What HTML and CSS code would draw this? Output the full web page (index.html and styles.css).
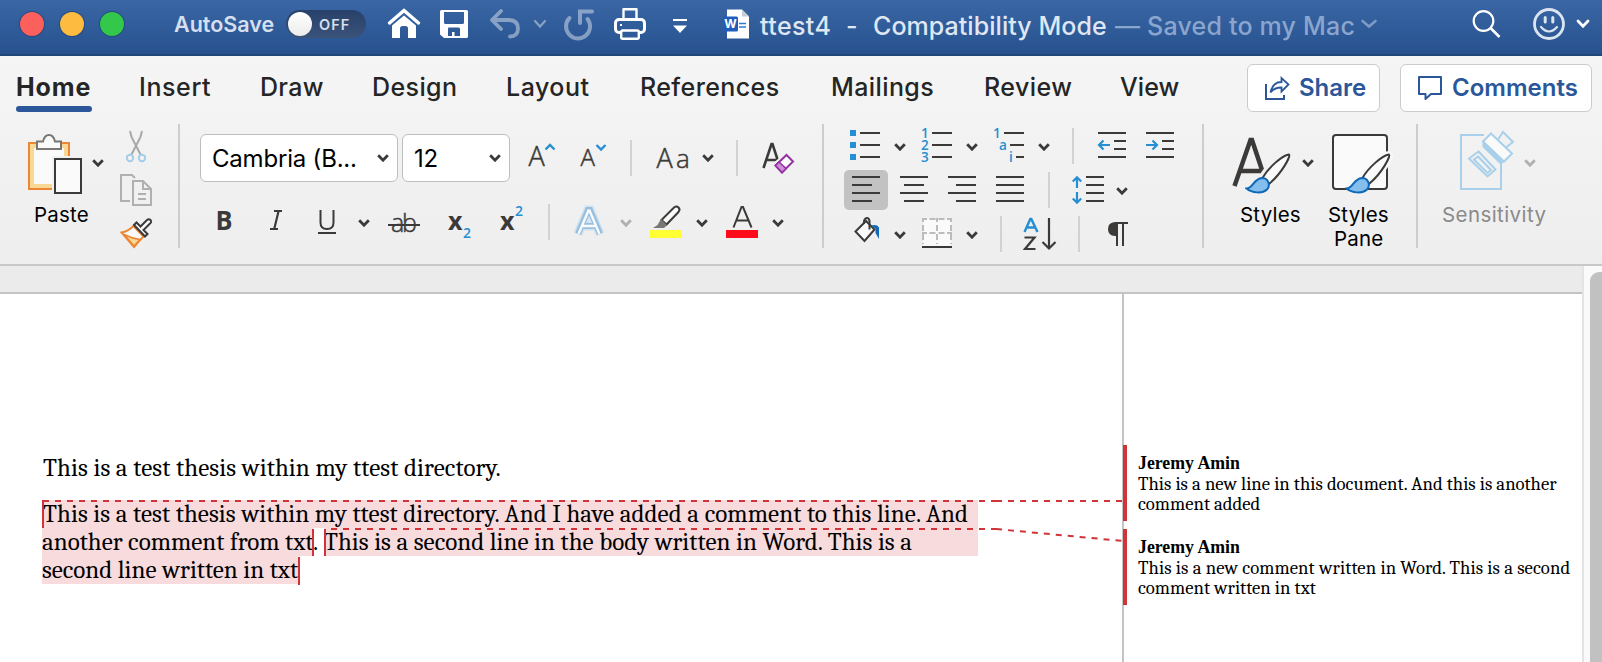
FILE: index.html
```html
<!DOCTYPE html>
<html lang="en">
<head>
<meta charset="utf-8">
<title>ttest4</title>
<link rel="stylesheet" href="styles.css">
</head>
<body>
<svg class="defs" width="0" height="0">
  <symbol id="chev" viewBox="0 0 12 8"><path d="M1.2 1.3 6 6.2 10.8 1.3" fill="none" stroke="currentColor" stroke-width="2.8"/></symbol>
  <symbol id="brush" viewBox="0 0 48 42">
    <path d="M17.500 25C23 15 37 2.500 44 1.500C46 3 37 20 24.500 30.500Z" fill="#fafafa" stroke="#3b3a39" stroke-width="2"/>
    <path d="M1.500 35.500C8 35.500 8 26 17 25C23 25 26 32 22 36.500C17 41 7 40 1.500 35.500Z" fill="#83beec" stroke="#1068b8" stroke-width="2"/>
  </symbol>
</svg>

<header class="titlebar">
  <i class="light red"></i><i class="light amber"></i><i class="light green"></i>
  <span class="autosave t">AutoSave</span>
  <span class="toggle"><i class="knob"></i><span class="off t">OFF</span></span>
  <svg class="ml-22" width="32" height="32" viewBox="0 0 32 32"><path d="M1.500 15 16 2.500 30.500 15" fill="none" stroke="#fff" stroke-width="3.400" stroke-linecap="round"/><path d="M4 17.500 16 7.500 28 17.500V30H20V20.500Q20 18 17.500 18H14.500Q12 18 12 20.500V30H4Z" fill="#fff"/></svg>
  <svg class="ml-20" width="28" height="32" viewBox="0 0 28 32"><path fill="#fff" fill-rule="evenodd" d="M1.500 2H26.500Q28 2 28 3.500V28.500Q28 30 26.500 30H4L0 26.500V3.500Q0 2 1.500 2ZM4 4V14.500Q4 16 5.500 16H22.500Q24 16 24 14.500V4ZM8.500 19.500Q8 20 8 21V28H12V24H14.500V28H20V21Q20 19.500 18.500 19.500Z"/></svg>
  <svg class="ml-22 dim" width="30" height="32" viewBox="0 0 30 32"><path d="M11 3 2 12 11 21M2.500 12H19Q28 12.500 28 20.500 28 28.500 20 28.500" fill="none" stroke="#fff" stroke-width="3.800" stroke-linecap="round" stroke-linejoin="round"/></svg>
  <svg class="ml-14 dim" width="12" height="8" viewBox="0 0 12 8"><path d="M1 1 6 6.500 11 1" fill="none" stroke="#fff" stroke-width="2.200" stroke-linecap="round"/></svg>
  <svg class="ml-18 dim" width="30" height="34" viewBox="0 0 30 34"><path d="M5.500 11A12 12 0 1 0 23.500 12M16 16V4.500H28" fill="none" stroke="#fff" stroke-width="4" stroke-linecap="round" stroke-linejoin="miter"/></svg>
  <svg class="ml-20" width="32" height="32" viewBox="0 0 32 32"><path d="M9.500 10V1.200H22.500V10" fill="none" stroke="#fff" stroke-width="2.400" stroke-linejoin="round"/><rect x="1.500" y="11.500" width="29" height="13" rx="3.500" fill="none" stroke="#fff" stroke-width="3"/><rect x="7.200" y="22.500" width="17.600" height="8.300" rx="1.500" fill="#2e5a9a" stroke="#fff" stroke-width="2.400"/><rect x="6" y="16" width="2" height="2" fill="#fff"/></svg>
  <svg class="ml-27 drop" width="14" height="16" viewBox="0 0 14 16"><path d="M0 1H14V3H0ZM0 7.500H14L7 15Z" fill="#fff"/></svg>
  <svg class="ml-36" width="27" height="32" viewBox="0 0 27 32"><path d="M4 1.500H19L26 8.500V30.500H4Z" fill="#fff"/><path d="M19 1.500V8.500H26Z" fill="#c6ccd4"/><path d="M16 15.500H23M16 19H23" stroke="#2b7cd3" stroke-width="1.400"/><rect x="0" y="8.500" width="15" height="15" rx="1.500" fill="#1f5cbd"/><text x="7.500" y="20" text-anchor="middle" class="wmark">W</text></svg>
  <span class="title t t1">ttest4</span><span class="title t t2">-</span><span class="title t t3">Compatibility Mode</span><span class="title faint t t4">— Saved to my Mac</span>
  <svg width="16" height="8" viewBox="0 0 16 8"><path d="M1.500 1 8 6.500 14.500 1" fill="none" stroke="#7d9bc6" stroke-width="2.600" stroke-linecap="round"/></svg>
  <svg class="search" width="30" height="32" viewBox="0 0 30 32"><circle cx="12.500" cy="13" r="9.800" fill="none" stroke="#fff" stroke-width="2.200"/><path d="M19.500 20 28.500 29" stroke="#fff" stroke-width="2.600"/></svg>
  <svg class="ml-32" width="32" height="32" viewBox="0 0 32 32"><circle cx="16" cy="16" r="14.500" fill="none" stroke="#dbe4f1" stroke-width="2.800"/><path d="M12.200 9.500V14M19.800 9.500V14" stroke="#dbe4f1" stroke-width="3" stroke-linecap="round"/><path d="M8 19Q16 28 24 19" fill="none" stroke="#dbe4f1" stroke-width="2.200" stroke-linecap="round"/></svg>
  <svg class="ml-12" width="12" height="8" viewBox="0 0 12 8"><path d="M1 1 6 6.200 11 1" fill="none" stroke="#fff" stroke-width="2.800" stroke-linecap="round"/></svg>
</header>

<section class="ribbon">
  <nav class="tabs">
    <span class="tab w-home active"><b class="t">Home</b></span>
    <span class="tab w-insert t">Insert</span>
    <span class="tab w-draw t">Draw</span>
    <span class="tab w-design t">Design</span>
    <span class="tab w-layout t">Layout</span>
    <span class="tab w-refs t">References</span>
    <span class="tab w-mail t">Mailings</span>
    <span class="tab w-review t">Review</span>
    <span class="tab w-view t">View</span>
    <button class="pill share"><svg width="26" height="26" viewBox="0 0 26 26"><path d="M2 9V24H20V20" fill="none" stroke="#2b579a" stroke-width="2"/><path d="M6.500 17.500C8 10 12 7 17.500 7V3L24.500 9.500 17.500 16.500V12.500C13 12.500 9 14 6.500 17.500Z" fill="none" stroke="#2b579a" stroke-width="1.800"/></svg><span class="t">Share</span></button>
    <button class="pill comments"><svg width="26" height="26" viewBox="0 0 26 26"><path d="M2 2H24V19H14L8.500 24V19H2Z" fill="none" stroke="#2b579a" stroke-width="2" stroke-linejoin="round"/></svg><span class="t">Comments</span></button>
  </nav>

  <div class="tools">
    <div class="group clip">
      <div class="big paste">
        <div class="bigrow">
          <svg width="54" height="60" viewBox="0 0 54 60"><path d="M1 9H41V55H1Z" fill="#f8d894" stroke="#ed8733" stroke-width="2"/><path d="M6 14H36V50H6Z" fill="#fafafa"/><path d="M24 22H43V57H24Z" fill="#f1f1f1"/><path d="M9 15V7.500H15C16 3 18 1 21 1S26 3 27 7.500H33V15Z" fill="#fafafa" stroke="#797774" stroke-width="2"/><path d="M27 25H53V59H27Z" fill="#fafafa" stroke="#3b3a39" stroke-width="2"/></svg>
          <svg class="chev up ml-10"><use href="#chev"/></svg>
        </div>
        <span class="label l-paste t">Paste</span>
      </div>
      <div class="clipcol">
        <svg width="32" height="32" viewBox="0 0 32 32"><path d="M10 1 11.500 7 20.500 24.500M22 1 20.500 7 11.500 24.500" fill="none" stroke="#a9a8a7" stroke-width="2"/><circle cx="10" cy="28" r="3.200" fill="none" stroke="#a5cde8" stroke-width="2"/><circle cx="22" cy="28" r="3.200" fill="none" stroke="#a5cde8" stroke-width="2"/></svg>
        <svg width="32" height="32" viewBox="0 0 32 32"><path d="M10 27H1V1H12L15 4" fill="none" stroke="#b1b0af" stroke-width="2"/><path d="M13 7H23L31 15V31H13ZM23 7V15H31M18 20H26M18 25H26" fill="none" stroke="#b1b0af" stroke-width="2"/></svg>
        <svg width="32" height="32" viewBox="0 0 32 32"><path d="M1.500 14.500Q8 13.500 13.500 8L23.500 18.500Q20 22 14 29Z" fill="#fafafa" stroke="#ed8733" stroke-width="2"/><path d="M4 16.500Q12 20.500 20 21.500L14 28Z" fill="#f8d894" stroke="#ed8733" stroke-width="1.600"/><path d="M14 7 16.500 4.500 20.500 8.500 27 2Q29 .5 30.500 2 32 4 30 5.500L23.500 12 27.500 16 25 18.500Z" fill="#fafafa" stroke="#3b3a39" stroke-width="2"/></svg>
      </div>
    </div>
    <i class="divider"></i>

    <div class="group font">
      <div class="row r48">
        <span class="select s-font"><span class="t">Cambria (B...</span><svg class="chev"><use href="#chev"/></svg></span>
        <span class="select s-size"><span class="t">12</span><svg class="chev"><use href="#chev"/></svg></span>
        <svg class="ml-18" width="28" height="48"><text class="g" x=".5" y="32" font-size="27">A</text><path d="M17.500 15.500 22 11 26.500 15.500" fill="none" stroke="#268ed2" stroke-width="2.400"/></svg>
        <svg class="ml-24" width="28" height="48"><text class="g" x=".5" y="32" font-size="24">A</text><path d="M16.500 11 21 15.500 25.500 11" fill="none" stroke="#268ed2" stroke-width="2.400"/></svg>
        <i class="sep ml-22"></i>
        <svg class="ml-24" width="34" height="48"><text class="g" x=".5" y="34" font-size="27">A</text><text class="g" x="20" y="34" font-size="26">a</text></svg>
        <svg class="chev ml-12"><use href="#chev"/></svg>
        <i class="sep ml-22"></i>
        <svg class="ml-22" width="36" height="48"><path d="M3.500 34 11.500 10H12.500L19 30M6 26H18" fill="none" stroke="#3b3a39" stroke-width="2.600"/><path d="M15 31 27 20.500 33.500 27.500 21.500 38Z" fill="#fafafa" stroke="#f1f1f1" stroke-width="5"/><path d="M15.500 31.500 26.500 21 33 27.500 22 38.500Z" fill="#fff" stroke="#9332a0" stroke-width="2"/><path d="M15.500 31.500 19 28 26 34.500 22 38.500Z" fill="#cf8fd6" stroke="#9332a0" stroke-width="1.600"/></svg>
      </div>
      <div class="row r36 mt-22">
        <svg class="ml-14" width="22" height="36"><text class="g bd" x="1.500" y="26" font-size="26" textLength="17" lengthAdjust="spacingAndGlyphs">B</text></svg>
        <svg class="ml-32" width="18" height="36"><path d="M6 7H14M2 25H10M10.600 7 6.200 25" fill="none" stroke="#3b3a39" stroke-width="2.200"/></svg>
        <svg class="ml-32" width="18" height="36"><path d="M2.500 6V18.500Q2.500 25 9 25T15.500 18.500V6" fill="none" stroke="#3b3a39" stroke-width="2"/><path d="M0 29H18" stroke="#3b3a39" stroke-width="2"/></svg>
        <svg class="chev low ml-22"><use href="#chev"/></svg>
        <svg class="ml-18" width="32" height="36"><text class="g" x="3" y="27.500" font-size="25" textLength="26">ab</text><path d="M0 21H32" stroke="#3b3a39" stroke-width="2"/></svg>
        <svg class="ml-28" width="26" height="36"><text class="g bd" x="0" y="26" font-size="25">x</text><text class="g blue" x="15" y="34" font-size="14">2</text></svg>
        <svg class="ml-26" width="24" height="36"><text class="g bd" x="0" y="26" font-size="25">x</text><text class="g blue" x="15" y="12" font-size="14">2</text></svg>
        <i class="sep ml-24"></i>
        <svg class="ml-24" width="30" height="36" viewBox="0 0 30 36"><path d="M4 30 14 6H16L26 30M8 22H22" fill="none" stroke="#cfe2f1" stroke-width="9"/><path d="M4 30 14 6H16L26 30M8 22H22" fill="none" stroke="#97bfdf" stroke-width="6"/><path d="M4.500 30 14.500 6.500H15.500L25.500 30M9 22H21" fill="none" stroke="#fafafa" stroke-width="2.400"/></svg>
        <svg class="chev low pale ml-16"><use href="#chev"/></svg>
        <svg class="ml-18" width="32" height="36"><path d="M11.500 16 24 3.500Q26.500 1.500 28.500 3.500T28.500 8L16.500 20.500Z" fill="#fafafa" stroke="#3b3a39" stroke-width="2"/><path d="M11 15 17 21 14 24H3L7.500 21Z" fill="#797774"/><path d="M0 26H32V34H0Z" fill="#ffff33"/></svg>
        <svg class="chev low ml-14"><use href="#chev"/></svg>
        <svg class="ml-18" width="32" height="36"><path d="M7.500 23.500 15.500 3H17L25.500 23.500M10.500 16.500H22.500" fill="none" stroke="#3b3a39" stroke-width="2"/><path d="M0 26H32V34H0Z" fill="#fd0b1b"/></svg>
        <svg class="chev low ml-14"><use href="#chev"/></svg>
      </div>
    </div>
    <i class="divider"></i>

    <div class="group para">
      <div class="row r36 mt-4">
        <svg class="ml-6" width="30" height="36"><path d="M0 2H6V8H0ZM0 14H6V20H0ZM0 26H6V32H0Z" fill="#268ed2"/><path d="M10 5H30M10 17H30M10 29H30" stroke="#3b3a39" stroke-width="2"/></svg>
        <svg class="chev low ml-14"><use href="#chev"/></svg>
        <svg class="ml-16" width="30" height="36"><text class="n" x="-1" y="10">1</text><text class="n" x="-1" y="22">2</text><text class="n" x="-1" y="34">3</text><path d="M10 5H30M10 17H30M10 29H30" stroke="#3b3a39" stroke-width="2"/></svg>
        <svg class="chev low ml-14"><use href="#chev"/></svg>
        <svg class="ml-16" width="30" height="36"><text class="n" x="-1" y="10">1</text><text class="n" x="5" y="22">a</text><text class="n" x="15" y="34">i</text><path d="M10 5H30M16 17H30M22 29H30" stroke="#3b3a39" stroke-width="2"/></svg>
        <svg class="chev low ml-14"><use href="#chev"/></svg>
        <i class="sep ml-22"></i>
        <svg class="ml-24" width="28" height="36"><path d="M0 5H28M16 13H28M16 21H28M0 29H28" stroke="#3b3a39" stroke-width="2"/><path d="M12 17H1M5.500 12.500 1 17 5.500 21.500" fill="none" stroke="#268ed2" stroke-width="2.200"/></svg>
        <svg class="ml-20" width="28" height="36"><path d="M0 5H28M16 13H28M16 21H28M0 29H28" stroke="#3b3a39" stroke-width="2"/><path d="M0 17H11M6.500 12.500 11 17 6.500 21.500" fill="none" stroke="#268ed2" stroke-width="2.200"/></svg>
      </div>
      <div class="row r40 mt-6">
        <span class="pressed"><svg width="28" height="40"><path d="M0 7H28M0 15H20M0 23H28M0 31H20" stroke="#3b3a39" stroke-width="2"/></svg></span>
        <svg class="ml-12" width="28" height="40"><path d="M0 7H28M4 15H24M0 23H28M4 31H24" stroke="#3b3a39" stroke-width="2"/></svg>
        <svg class="ml-20" width="28" height="40"><path d="M0 7H28M8 15H28M0 23H28M8 31H28" stroke="#3b3a39" stroke-width="2"/></svg>
        <svg class="ml-20" width="28" height="40"><path d="M0 7H28M0 15H28M0 23H28M0 31H28" stroke="#3b3a39" stroke-width="2"/></svg>
        <i class="sep ml-24"></i>
        <svg class="ml-22" width="32" height="40"><path d="M14 7H32M14 15H32M14 23H32M14 31H32" stroke="#3b3a39" stroke-width="2"/><path d="M5 18V7.500M.8 11.500 5 7.300 9.200 11.500M5 22V32.500M.8 28.500 5 32.700 9.200 28.500" fill="none" stroke="#268ed2" stroke-width="2.200"/></svg>
        <svg class="chev low ml-12"><use href="#chev"/></svg>
      </div>
      <div class="row r36 mt-6">
        <svg class="ml-10" width="28" height="36"><path d="M1.500 15.500 12 5 20.500 13.500 10.500 25Z" fill="#fafafa" stroke="#3b3a39" stroke-width="2"/><path d="M10 8V5Q11 2 13 2T15.500 5V13.500" fill="none" stroke="#3b3a39" stroke-width="2"/><path d="M17 9.500Q23 8 25 11.500V23L21.500 17V12.500Z" fill="#1068b8"/></svg>
        <svg class="chev low ml-12"><use href="#chev"/></svg>
        <svg class="ml-16" width="30" height="36"><path d="M1 3H29V30H1Z" fill="#fafafa"/><path d="M0 3H30M0 17H30" stroke="#bdbcbb" stroke-width="2" stroke-dasharray="5 2.500 6 3 6 2.500 6"/><path d="M1 2V28M15 2V28M29 2V28" stroke="#bdbcbb" stroke-width="2" stroke-dasharray="4 3 6 3 6 3"/><path d="M0 31H30" stroke="#3b3a39" stroke-width="2"/></svg>
        <svg class="chev low ml-14"><use href="#chev"/></svg>
        <i class="sep ml-22"></i>
        <svg class="ml-20" width="36" height="36"><path d="M2.500 16 8.300 3H9.300L15.500 16M4.500 11.500H13.500" fill="none" stroke="#268ed2" stroke-width="2.400"/><path d="M2.500 21.500H12.500L3 33H13.500M27 2V32M20.500 26 27 32.500 33.500 26" fill="none" stroke="#3b3a39" stroke-width="2.200"/></svg>
        <i class="sep ml-20"></i>
        <svg class="ml-26" width="24" height="36"><path d="M9 6H22V8H18V30H16V8H12V30H10V20H9Q2 19.500 2 13T9 6Z" fill="#3b3a39"/></svg>
      </div>
    </div>
    <i class="divider"></i>

    <div class="group styles">
      <div class="big b-styles">
        <div class="bigrow">
          <svg width="62" height="60" viewBox="0 0 62 60"><path d="M4.500 52 20.500 6H22L34 42M10.500 37H34" fill="none" stroke="#3b3a39" stroke-width="4.500"/><svg x="15" y="19" width="48" height="42"><path d="M17 25C23 14 36 2 44 1.500C47 2 38 18 24 31Z" stroke="#f1f1f1" stroke-width="7"/><use href="#brush"/></svg></svg>
          <svg class="chev up ml-10"><use href="#chev"/></svg>
        </div>
        <span class="label l-styles t">Styles</span>
      </div>
      <div class="big b-pane">
        <div class="bigrow">
          <svg width="64" height="60" viewBox="0 0 64 60"><rect x="5" y="1" width="54" height="54" rx="3" fill="#fafafa" stroke="#3b3a39" stroke-width="2"/><svg x="17" y="19" width="48" height="42"><path d="M2 36C8 34 8 26 17 25C23 14 36 2 44 1.500C47 2 38 18 24 31" fill="#f8f8f8" stroke="#f8f8f8" stroke-width="7"/><use href="#brush"/></svg></svg>
        </div>
        <span class="label l-pane t">Styles</span>
        <span class="label l-pane2 t">Pane</span>
      </div>
    </div>
    <i class="divider"></i>

    <div class="group sens">
      <div class="big b-sens">
        <div class="bigrow">
          <svg width="60" height="60" viewBox="0 4 60 60"><g fill="none" stroke="#a9d0ea" stroke-width="2"><path d="M26 5H3V59H43V34"/><path d="M20.500 21.500 37.500 39.500 29.500 46.500 11 28.500Z" fill="#f1f1f1"/><path d="M20 26.500 33 40 29.500 43 16 29.500Z"/><path d="M33 3.500 54 23.500 46 31.500 25 11.500Z" fill="#fafafa"/><path d="M40 9.500 45 2 55 12 48 17.500"/></g><path d="M24.500 11 46.500 31 43 35 24.500 17Z" fill="#a9d0ea"/></svg>
          <svg class="chev up pale ml-6"><use href="#chev"/></svg>
        </div>
        <span class="label l-sens t">Sensitivity</span>
      </div>
    </div>
  </div>
</section>

<main class="workspace">
  <div class="sheet">
    <div class="page">
      <p class="ln first"><span class="t l1">This is a test thesis within my ttest directory.</span></p>
      <p class="ln wide"><span class="t l2">This is a test thesis within my ttest directory. And I have added a comment to this line. And</span></p>
      <p class="ln flex3"><span class="hl a3"><span class="t">another comment from txt</span></span><span class="dot">.</span><span class="hl b3"><span class="t">This is a second line in the body written in Word. This is a</span></span></p>
      <p class="ln"><span class="hl a4"><span class="t">second line written in txt</span></span></p>
    </div>
    <aside class="margin">
      <article class="note">
        <b class="t">Jeremy Amin</b>
        <span class="t">This is a new line in this document. And this is another</span>
        <span class="t">comment added</span>
      </article>
      <article class="note">
        <b class="t">Jeremy Amin</b>
        <span class="t n3">This is a new comment written in Word. This is a second</span>
        <span class="t">comment written in txt</span>
      </article>
    </aside>
    <svg class="marks" width="1130" height="368" viewBox="0 294 1130 368"><g fill="none" stroke="#d13438" stroke-width="2"><path d="M43 500V528M313 529V556M325 529V556M299 557V585"/><path d="M43 501H1000" stroke-dasharray="6 6"/><path d="M996 501H1123" stroke-dasharray="6 6"/><path d="M331 529H998" stroke-dasharray="6 6"/><path d="M996 529 1123 541" stroke-dasharray="6 6"/></g></svg>
  </div>
  <div class="scroll"><i class="thumb"></i></div>
</main>
</body>
</html>
```
FILE: styles.css
```css
* { box-sizing: border-box; }
body { margin: 0; width: 1602px; height: 662px; overflow: hidden; background: #fff; font-family: Inter, "Liberation Sans", sans-serif; color: #000; }
svg { display: block; flex: none; overflow: visible; }
.defs { position: absolute; }
i { display: block; flex: none; }
p { margin: 0; }
.t, .title, .dot { white-space: pre; }

.titlebar { height: 56px; display: flex; align-items: center; padding: 0 0 6px 20px; background: linear-gradient(#3a66a5, #27528f); border-bottom: 2px solid #214678; }
.light { width: 24px; height: 24px; border-radius: 50%; margin-right: 16px; box-shadow: 0 0 0 1px rgba(20, 50, 100, .45); }
.red { background: #fc605c; }
.amber { background: #fdbc40; }
.green { background: #34c84a; }
.autosave { width: 112px; margin-left: 34px; font-size: 21.500px; font-weight: 600; color: #d5dfee; }
.toggle { flex: none; width: 80px; height: 28px; border-radius: 14px; display: flex; align-items: center; padding-left: 2px; background: linear-gradient(#28416a, #3b5379); }
.knob { width: 24px; height: 24px; border-radius: 50%; background: linear-gradient(#fff, #ececec); }
.off { margin-left: 7px; font-size: 14.500px; font-weight: 600; color: #d5dfee; letter-spacing: 1px; }
.dim { opacity: .42; }
.drop { margin-top: 3px; }
.wmark { font: 700 12px Inter, sans-serif; fill: #fff; }
.title { font-size: 25px; font-weight: 500; color: #dfe7f3; flex: none; line-height: 30px; padding-top: 3px; }
.t1 { margin-left: 10px; width: 86px; letter-spacing: .4px; }
.t2 { width: 27px; }
.t3 { width: 242px; letter-spacing: .05px; }
.t4 { width: 246px; letter-spacing: .2px; }
.faint { color: #8ba6ce; }
.search { margin-left: 94px; }

.ribbon { height: 210px; background: linear-gradient(#f5f5f5, #f2f2f2 40%, #eeeeee); border-bottom: 2px solid #c8c8c8; }
.tabs { height: 58px; display: flex; padding-left: 16px; font-size: 25px; font-weight: 500; color: #252525; line-height: 30px; letter-spacing: .4px; }
.tab { flex: none; padding-top: 16px; }
.tab b { font-weight: 700; display: block; letter-spacing: .9px; }
.active { height: 56px; position: relative; }
.active::after { content: ""; position: absolute; left: 0; top: 50px; width: 76px; height: 6px; border-radius: 3px; background: #2b579a; }
.w-home { width: 123px; }
.w-insert { width: 121px; letter-spacing: .6px; }
.w-draw { width: 112px; letter-spacing: .3px; }
.w-design { width: 134px; }
.w-layout { width: 134px; letter-spacing: .5px; }
.w-refs { width: 191px; }
.w-mail { width: 153px; }
.w-review { width: 136px; letter-spacing: .45px; }
.w-view { width: 127px; letter-spacing: .1px; }
.pill { flex: none; height: 48px; margin: 8px 0 0; border: 1.500px solid #cbcbcb; border-radius: 6px; background: #fff; display: flex; align-items: center; padding: 0 0 0 16px; font: 600 24px/30px Inter, sans-serif; color: #2b579a; }
.share { width: 133px; gap: 9px; }
.comments { width: 192px; margin-left: 20px; gap: 9px; }

.tools { display: flex; padding-top: 10px; height: 150px; }
.group { flex: none; height: 124px; }
.divider { width: 2px; height: 124px; background: #cdcdcd; }
.sep { width: 2px; height: 36px; background: #d2d2d2; }
.row { display: flex; align-items: center; }
.r48 { height: 48px; }
.r36 { height: 36px; }
.r40 { height: 40px; }
.chev { width: 12px; height: 8px; color: #3b3a39; }
.pale { color: #b1b0af; }
.low { margin-top: 1px; }
.up { margin-bottom: 2px; }
.clip { width: 178px; display: flex; }
.paste { width: 76px; margin-left: 28px; }
.bigrow { display: flex; align-items: center; height: 60px; margin-top: 10px; }
.label { display: block; font-size: 20.500px; line-height: 24px; letter-spacing: .2px; }
.l-paste { margin: 9px 0 0 6px; }
.clipcol { margin-left: 16px; padding-top: 6px; display: flex; flex-direction: column; gap: 12px; }

.font { width: 642px; padding: 10px 0 0 20px; }
.select { flex: none; height: 48px; border: 1.500px solid #bdbdbd; border-radius: 6px; background: #fff; display: flex; align-items: center; justify-content: space-between; padding: 0 8px 0 11px; font-size: 24px; line-height: 30px; letter-spacing: -.2px; }
.select .t { padding-top: 2px; }
.s-font { width: 198px; }
.s-size { width: 108px; margin-left: 4px; }
.g { font-family: "Open Sans", "Noto Sans", sans-serif; font-weight: 300; fill: #3b3a39; stroke: #3b3a39; stroke-width: .5px; }
.bd { font-weight: 700; stroke: none; }
.blue { fill: #268ed2; font-weight: 600; stroke: none; }
.n { font: 600 13.500px "Open Sans", "Noto Sans", sans-serif; fill: #268ed2; }

.para { width: 378px; padding-left: 20px; }
.pressed { width: 44px; height: 40px; border-radius: 5px; background: #c2c2c2; padding-left: 8px; }
.styles { width: 212px; display: flex; }
.b-styles { width: 84px; margin-left: 26px; }
.b-pane { width: 66px; margin-left: 14px; }
.l-styles { margin: 9px 0 0 10px; }
.l-pane { margin: 9px 0 0 0; }
.l-pane2 { margin: 0 0 0 6px; }
.b-sens { width: 104px; margin-left: 24px; }
.b-sens .bigrow { padding-left: 16px; }
.l-sens { margin: 9px 0 0 0; color: #8a8a8a; letter-spacing: .42px; }

.workspace { display: flex; height: 396px; background: #ebebeb; }
.sheet { width: 1582px; margin-top: 26px; border-top: 2px solid #c4c4c4; background: #fff; display: flex; position: relative; }
.page { width: 1122px; padding: 160px 0 0 42px; font-family: Cambria, Caladea, "DejaVu Serif Condensed", serif; font-size: 25px; }
.ln { height: 28px; line-height: 28px; display: flex; }
.first { margin-bottom: 18px; }
.l1 { padding-left: 1px; letter-spacing: .08px; }
.wide { width: 936px; background: #f7dbdd; }
.l2 { padding-left: 1px; letter-spacing: .06px; }
.flex3 { width: 936px; }
.hl { display: block; height: 28px; background: #f7dbdd; flex: none; }
.a3 { width: 271px; }
.dot { width: 11px; }
.b3 { width: 654px; letter-spacing: .03px; }
.a4 { width: 256px; }
.margin { width: 460px; border-left: 2px solid #c4c4c4; padding-top: 151px; }
.note { height: 76px; margin: 0 0 8px -1px; border-left: 4px solid #d13438; padding: 8px 0 0 11px; font: 18.700px/20px Cambria, Caladea, "DejaVu Serif Condensed", serif; }
.note b, .note span { display: block; }
.note b { font: bold 17.800px/21px "Liberation Serif", serif; }
.n3 { letter-spacing: .08px; }
.marks { position: absolute; left: 0; top: 0; }
.scroll { width: 20px; border-left: 2px solid #e4e4e4; background: #fafafa; padding: 6px 0 0 6px; overflow: hidden; }
.thumb { width: 24px; height: 390px; border-radius: 9px 9px 0 0; background: #c1c1c1; }

.mt-4 { margin-top: 4px; }
.mt-6 { margin-top: 6px; }
.mt-22 { margin-top: 22px; }
.ml-6 { margin-left: 6px; }
.ml-10 { margin-left: 10px; }
.ml-12 { margin-left: 12px; }
.ml-14 { margin-left: 14px; }
.ml-16 { margin-left: 16px; }
.ml-18 { margin-left: 18px; }
.ml-20 { margin-left: 20px; }
.ml-22 { margin-left: 22px; }
.ml-24 { margin-left: 24px; }
.ml-26 { margin-left: 26px; }
.ml-27 { margin-left: 27px; }
.ml-28 { margin-left: 28px; }
.ml-32 { margin-left: 32px; }
.ml-36 { margin-left: 36px; }
```
